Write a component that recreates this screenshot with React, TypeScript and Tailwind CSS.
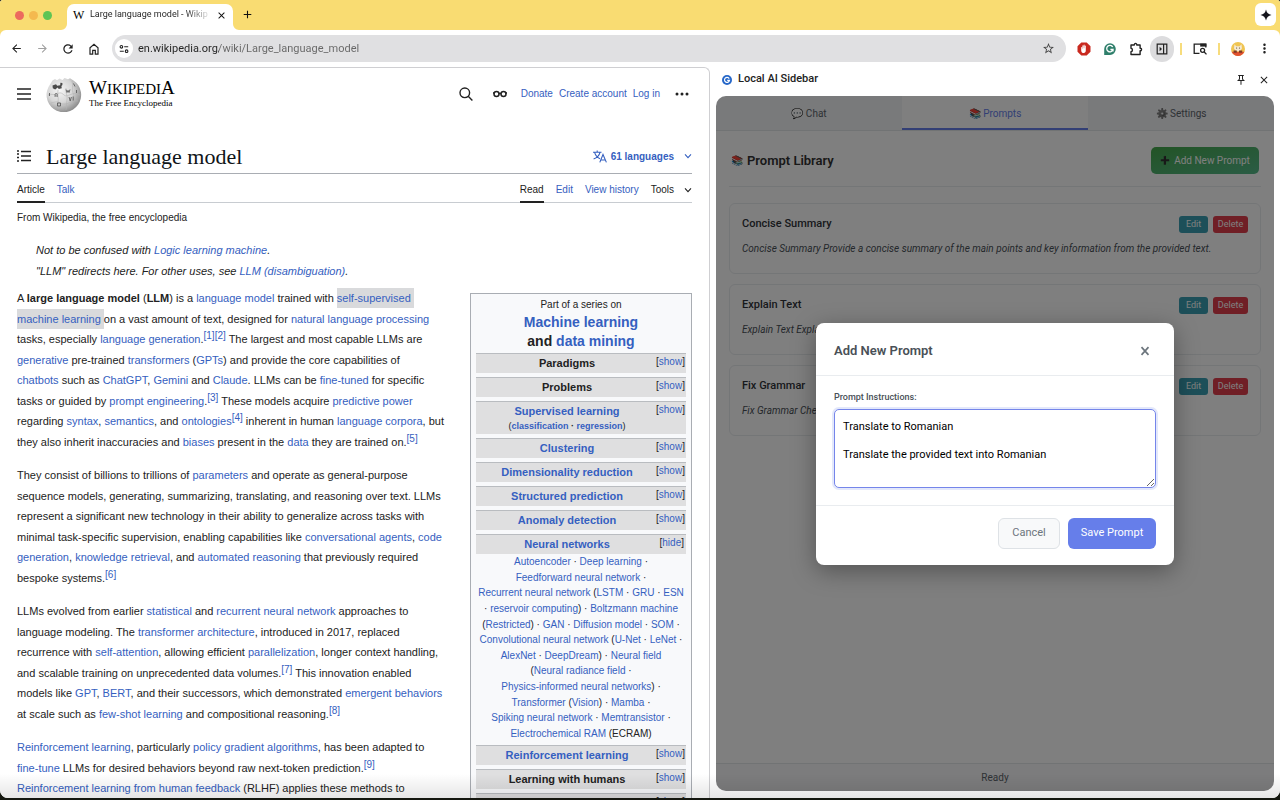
import React from "react";
import {
  MdAdd,
  MdArrowBack,
  MdArrowForward,
  MdClose,
  MdMoreVert,
  MdOutlinePushPin,
  MdRefresh,
  MdStarBorder,
} from "react-icons/md";

/* ---------- shared bits ---------- */

function A({ children }: { children: React.ReactNode }) {
  return (
    <a href="#" className="text-[#3560c0]">
      {children}
    </a>
  );
}

function Ref({ n }: { n: string }) {
  return (
    <sup className="relative -top-1 align-baseline text-[10px] leading-none">
      <A>{n}</A>
    </sup>
  );
}

function Lines({ className, children }: { className: string; children: React.ReactNode }) {
  return <div className={"flex flex-col justify-between whitespace-nowrap leading-5 " + className}>{children}</div>;
}

function Chevron({ className }: { className: string }) {
  return (
    <svg viewBox="0 0 8 8" className={"h-2 w-2 " + className} fill="none" stroke="currentColor" strokeWidth="1.1">
      <path d="M1 2.4 4 5.6 7 2.4" />
    </svg>
  );
}

/* ---------- browser chrome ---------- */

function TabStrip() {
  return (
    <div className="flex h-[30px] items-end bg-[#f9dc72]">
      <div className="flex h-full w-[61px] items-center gap-[5px] pl-[15px]">
        <span className="h-[9px] w-[9px] rounded-full bg-[#ec6a5e]" />
        <span className="h-[9px] w-[9px] rounded-full bg-[#f4b94f]" />
        <span className="h-[9px] w-[9px] rounded-full bg-[#5fc454]" />
      </div>
      <svg viewBox="0 0 6 6" className="h-1.5 w-1.5 fill-white">
        <path d="M6 0v6H0A6 6 0 0 0 6 0Z" />
      </svg>
      <div className="flex h-[26px] w-[166px] items-center rounded-t-[7px] bg-white pb-1 pr-1.5 pl-1.5">
        <span className="w-[17px] font-['Liberation_Serif',serif] text-[12px] leading-none text-black">W</span>
        <span className="min-w-0 flex-1 bg-linear-to-r from-[#222] from-80% to-[#ddd] bg-clip-text text-[9px] whitespace-nowrap text-transparent">
          Large language model - Wikip
        </span>
        <button aria-label="Close tab" className="ml-2 text-[#111]">
          <MdClose className="h-[11px] w-[11px]" />
        </button>
      </div>
      <svg viewBox="0 0 6 6" className="h-1.5 w-1.5 fill-white">
        <path d="M0 0v6h6A6 6 0 0 1 0 0Z" />
      </svg>
      <button aria-label="New tab" className="mb-[9px] ml-[2px] text-[#111]">
        <MdAdd className="h-[13px] w-[13px]" />
      </button>
      <button aria-label="Assistant" className="mr-1 mb-1 ml-auto flex h-[23px] w-[21px] items-center justify-center rounded-md bg-white">
        <svg viewBox="0 0 12 12" className="h-3 w-3 fill-[#14141c]">
          <path d="M6 0.5Q6.9 5.1 11.5 6 6.9 6.9 6 11.5 5.1 6.9 0.5 6 5.1 5.1 6 0.5Z" />
        </svg>
      </button>
    </div>
  );
}

function Slot({ label, children }: { label: string; children: React.ReactNode }) {
  return (
    <button aria-label={label} className="flex h-[26px] w-[26px] shrink-0 items-center justify-center">
      {children}
    </button>
  );
}

function Toolbar() {
  return (
    <div className="bg-[#f9dc72]">
      <div className="flex h-[37px] items-center rounded-t-[6px] bg-white px-[3px] text-[#222]">
        <Slot label="Back">
          <MdArrowBack className="h-[13px] w-[13px]" />
        </Slot>
        <Slot label="Forward">
          <MdArrowForward className="h-[13px] w-[13px] text-[#a0a0a0]" />
        </Slot>
        <Slot label="Reload">
          <MdRefresh className="h-[14px] w-[14px]" />
        </Slot>
        <Slot label="Home">
          <svg viewBox="0 0 12 12" className="h-3 w-3" fill="none" stroke="currentColor" strokeWidth="1.2">
            <path d="M2 11.2V4.8L6 1.3l4 3.5v6.4H7.3V7.4H4.7v3.8Z" />
          </svg>
        </Slot>
        <div className="mx-[5px] flex h-[27px] min-w-0 flex-1 items-center rounded-full bg-[#e0e0e2] pr-[11px] pl-[3px]">
          <button aria-label="Site information" className="flex h-[19px] w-[18px] items-center justify-center rounded-full bg-white">
            <svg viewBox="0 0 10 10" className="h-2.5 w-2.5" fill="none" stroke="currentColor" strokeWidth="1.1">
              <circle cx="2.4" cy="2.8" r="1.3" />
              <path d="M5.2 2.8h4M.8 7.2h4" />
              <circle cx="7.6" cy="7.2" r="1.3" />
            </svg>
          </button>
          <input
            aria-label="Address"
            className="mt-px ml-[5px] min-w-0 flex-1 bg-linear-to-r from-[#222] from-[81px] to-[#666] to-[81px] bg-clip-text text-[11px] text-transparent outline-none"
            defaultValue="en.wikipedia.org/wiki/Large_language_model"
          />
          <MdStarBorder className="h-[13px] w-[13px] text-[#444]" />
        </div>
        <Slot label="Ad blocker">
          <svg viewBox="0 0 14 14" className="h-3.5 w-3.5">
            <path fill="#c9291f" d="M4.3.5h5.4l3.800 3.800v5.400l-3.800 3.800H4.300L.5 9.700V4.300Z" />
            <path
              fill="#fff"
              d="M4.200 5.600c0-.8 1-.8 1 0v1.300h.2V3.900c0-.8 1-.8 1 0v2.400h.2V3.200c0-.8 1-.8 1 0v3.100h.2V4c0-.8 1-.8 1 0v4.500c0 1.600-.8 2.500-2 2.500-1.500 0-2.600-1-2.600-2.600Z"
            />
          </svg>
        </Slot>
        <Slot label="Grammar checker">
          <svg viewBox="0 0 14 14" className="h-3.5 w-3.5">
            <path fill="#2f7f6b" d="M7 1.300a5.800 5.800 0 0 1 0 11.600H1.200V7A5.800 5.800 0 0 1 7 1.300Z" />
            <path d="M9.700 5A3.200 3.200 0 1 0 10 7.500H7.400M10 7.400v2" fill="none" stroke="#fff" strokeWidth="1.300" />
          </svg>
        </Slot>
        <Slot label="Extensions">
          <svg viewBox="0 0 14 14" className="h-3.5 w-3.5" fill="none" stroke="currentColor" strokeWidth="1.400">
            <path d="M2 3h3.300c-.3-2 2.800-2 2.500 0h3.300v3.300c1.900-.2 1.900 2.600 0 2.400v3.800H2V9.700c1.900-.2 1.900-3.200 0-3.400Z" strokeLinejoin="round" />
          </svg>
        </Slot>
        <Slot label="Side panel">
          <span className="flex h-[26px] w-6 items-center justify-center rounded-full bg-[#dcdcde]">
            <svg viewBox="0 0 12 12" className="h-3 w-3" fill="none" stroke="currentColor" strokeWidth="1.200">
              <path d="M1.200 1.200h9.600v9.600H1.200ZM7.600 1.200v9.600" />
              <path d="M3.600 3.800v4.400L6 6Z" fill="currentColor" stroke="none" />
            </svg>
          </span>
        </Slot>
        <span className="mx-[5px] h-3 w-0.5 shrink-0 bg-[#f7dc7c]" />
        <Slot label="Search tabs">
          <svg viewBox="0 0 14 14" className="h-3.5 w-3.5" fill="none" stroke="currentColor" strokeWidth="1.300">
            <path d="M6.500 11.400H1.200V2.200h11.600v3.300" />
            <path d="M7.200 1.600h6.200v3H7.200Z" fill="currentColor" stroke="none" />
            <circle cx="9.600" cy="8.300" r="2" />
            <path d="m11 9.800 2.500 2.600" />
          </svg>
        </Slot>
        <span className="mx-[5px] h-3 w-0.5 shrink-0 bg-[#f7dc7c]" />
        <Slot label="Profile">
          <svg viewBox="0 0 14 14" className="h-3.5 w-3.5">
            <circle cx="7" cy="7" r="7" fill="#f0c552" />
            <path d="M.6 9.800a7 7 0 0 0 12.800 0Z" fill="#e0502f" />
            <path d="m3.500 2.300 1.600 2h3.600l1.800-2 .4 4.300-2 2.600H5.200L3 6.600Z" fill="#f4e9d2" />
            <path d="M2.600 8.500h3.200v2.200H2.600ZM8 8.500h3.200v2.200H8Z" fill="#7a3a24" />
            <circle cx="5.600" cy="6" r=".6" fill="#59422c" />
            <circle cx="8.500" cy="6" r=".6" fill="#59422c" />
          </svg>
        </Slot>
        <Slot label="Menu">
          <MdMoreVert className="h-[15px] w-[15px]" />
        </Slot>
      </div>
    </div>
  );
}

/* ---------- encyclopedia page ---------- */

function Globe() {
  return (
    <svg viewBox="0 0 36 36" className="h-9 w-9">
      <defs>
        <radialGradient id="globe" cx="38%" cy="35%" r="68%">
          <stop offset="0" stopColor="#f7f7f7" />
          <stop offset=".55" stopColor="#d6d6d6" />
          <stop offset="1" stopColor="#8c8c8c" />
        </radialGradient>
      </defs>
      <path
        d="M6.500 4.500 9 3l2 1.200 2.500-1.800 3 1.500 2-1.800 3.500 1.200 2-1 3.500 2.200A17.300 17.300 0 1 1 4 8.500Z"
        fill="url(#globe)"
      />
      <path d="M6.500 9.500 10 8.200l1.200 1.600 3-.6.200-2.400 2 .2v2l-1 1 .4 2.300-3 .8-1.200-1.500-2.400 1.800-2.400-1.200Z" fill="#4b4b4b" />
      <path
        d="M2 19c4-2 6 1 9-1s5-1 7 1 5 0 8-1 5 0 8 1M5 27c4-1 6-2 9 0s8 1 10-1 5-1 8-1M12 14c-1 5 1 8 0 12s0 5 1 7M20 12c-1 4 2 8 1 12s0 7-1 10M26 5c2 5-1 8 1 12s0 7-1 11"
        fill="none"
        stroke="#b4b4b4"
        strokeWidth=".6"
      />
      <g fill="none" stroke="#5c5c5c" strokeWidth=".9">
        <path d="M8.500 20.200h1.200c-2.800-3.600 3.600-3.600.9 0h1.300M20 13.500l1 3 1-2.200 1 2.200 1-3M23 21l1.200 4 1.200-4M27.200 20.500v4M11.500 27v3h3v-3h-3M27.500 7.500l1.500 3M30.500 14v3M3.500 17v3" />
      </g>
    </svg>
  );
}

function WikiHeader() {
  return (
    <header className="flex h-[51px] items-center text-[#222]">
      <button aria-label="Main menu">
        <svg viewBox="0 0 14 12" className="h-3 w-3.5" stroke="currentColor" strokeWidth="1.400">
          <path d="M0 1h14M0 6h14M0 11h14" />
        </svg>
      </button>
      <a href="#" className="ml-[15px] flex items-center gap-[7px] font-['Liberation_Serif',serif] text-black">
        <Globe />
        <span className="flex flex-col">
          <span className="text-[15px] leading-[18px]">
            <span className="text-[19px]">W</span>IKIPEDI<span className="text-[19px]">A</span>
          </span>
          <span className="text-[9px] leading-[10px]">The Free Encyclopedia</span>
        </span>
      </a>
      <div className="ml-auto flex items-center">
        <button aria-label="Search">
          <svg viewBox="0 0 14 14" className="h-3.5 w-3.5" fill="none" stroke="currentColor" strokeWidth="1.400">
            <circle cx="5.800" cy="5.800" r="4.800" />
            <path d="m9.200 9.200 4.200 4.300" />
          </svg>
        </button>
        <button aria-label="Appearance" className="ml-5">
          <svg viewBox="0 0 14 8" className="h-2 w-3.5" fill="none" stroke="currentColor" strokeWidth="1.500">
            <circle cx="3.500" cy="4" r="2.500" />
            <circle cx="10.500" cy="4" r="2.500" />
            <path d="M6 3.600h2M0 3h1.300M12.700 3H14" />
          </svg>
        </button>
        <nav className="ml-3.5 flex gap-1.5 text-[10px]">
          <A>Donate</A>
          <A>Create account</A>
          <A>Log in</A>
        </nav>
        <button aria-label="More options" className="mr-[3px] ml-[15px]">
          <svg viewBox="0 0 14 4" className="h-1 w-3.5" fill="currentColor">
            <circle cx="2" cy="2" r="1.500" />
            <circle cx="7" cy="2" r="1.500" />
            <circle cx="12" cy="2" r="1.500" />
          </svg>
        </button>
      </div>
    </header>
  );
}

function TitleBar() {
  return (
    <>
      <div className="mt-5 flex h-[35px] items-center border-b border-[#a9adb3]">
        <button aria-label="Contents" className="text-[#222]">
          <svg viewBox="0 0 14 12" className="h-3 w-3.5" stroke="currentColor" strokeWidth="1.400">
            <path d="M4 1.500h10M4 6h10M4 10.500h10M0 1h2M0 4h2M0 7.500h2M0 11h2" />
          </svg>
        </button>
        <h1 className="mt-px ml-[15px] font-['Liberation_Serif',serif] text-[22px] leading-8 text-[#101418]">Large language model</h1>
        <button className="ml-auto flex items-center text-[10px] font-bold text-[#3560c0]">
          <svg viewBox="0 0 14 13" className="mr-1 h-[13px] w-3.5" fill="none" stroke="currentColor" strokeWidth="1.100">
            <path d="M0 2.200h8.500M4.200.4v1.800M1.600 2.400C2.600 6 5 7.800 7 8.800M7 2.400C6.200 6 3.400 8 .6 9M6.800 12.400 10 4.500l3.400 7.900M8 10h4.200" />
          </svg>
          61 languages
          <Chevron className="ml-2.5" />
        </button>
      </div>
      <div className="flex h-[29px] items-stretch border-b border-[#c8ccd1] text-[10px]">
        <a href="#" className="-mb-px border-b-2 border-[#222] leading-[31px] text-[#222]">
          Article
        </a>
        <a href="#" className="ml-3 leading-[31px] text-[#3560c0]">
          Talk
        </a>
        <div className="ml-auto flex gap-3 leading-[31px]">
          <a href="#" className="-mb-px border-b-2 border-[#222] text-[#222]">
            Read
          </a>
          <A>Edit</A>
          <A>View history</A>
          <button className="flex h-[31px] items-center text-[#222]">
            Tools
            <Chevron className="ml-2.5" />
          </button>
        </div>
      </div>
    </>
  );
}

function Article() {
  return (
    <div className="flex min-w-0 flex-1 flex-col gap-[13px]">
      <Lines className="h-[164px]">
        <p>
          A <b>large language model</b> (<b>LLM</b>) is a <A>language model</A> trained with{" "}
          <mark className="inline-block bg-[#d9dadc] pr-[3px]">
            <A>self-supervised</A>
          </mark>
        </p>
        <p>
          <mark className="inline-block bg-[#d9dadc] pr-[3px]">
            <A>machine learning</A>
          </mark>
          on a vast amount of text, designed for <A>natural language processing</A>
        </p>
        <p>
          tasks, especially <A>language generation</A>.<Ref n="[1][2]" /> The largest and most capable LLMs are
        </p>
        <p>
          <A>generative</A> pre-trained <A>transformers</A> (<A>GPTs</A>) and provide the core capabilities of
        </p>
        <p>
          <A>chatbots</A> such as <A>ChatGPT</A>, <A>Gemini</A> and <A>Claude</A>. LLMs can be <A>fine-tuned</A> for specific
        </p>
        <p>
          tasks or guided by <A>prompt engineering</A>.<Ref n="[3]" /> These models acquire <A>predictive power</A>
        </p>
        <p>
          regarding <A>syntax</A>, <A>semantics</A>, and <A>ontologies</A>
          <Ref n="[4]" /> inherent in human <A>language corpora</A>, but
        </p>
        <p>
          they also inherit inaccuracies and <A>biases</A> present in the <A>data</A> they are trained on.
          <Ref n="[5]" />
        </p>
      </Lines>
      <Lines className="h-[123px]">
        <p>
          They consist of billions to trillions of <A>parameters</A> and operate as general-purpose
        </p>
        <p>sequence models, generating, summarizing, translating, and reasoning over text. LLMs</p>
        <p>represent a significant new technology in their ability to generalize across tasks with</p>
        <p>
          minimal task-specific supervision, enabling capabilities like <A>conversational agents</A>, <A>code</A>
        </p>
        <p>
          <A>generation</A>, <A>knowledge retrieval</A>, and <A>automated reasoning</A> that previously required
        </p>
        <p>
          bespoke systems.
          <Ref n="[6]" />
        </p>
      </Lines>
      <Lines className="h-[123px]">
        <p>
          LLMs evolved from earlier <A>statistical</A> and <A>recurrent neural network</A> approaches to
        </p>
        <p>
          language modeling. The <A>transformer architecture</A>, introduced in 2017, replaced
        </p>
        <p>
          recurrence with <A>self-attention</A>, allowing efficient <A>parallelization</A>, longer context handling,
        </p>
        <p>
          and scalable training on unprecedented data volumes.
          <Ref n="[7]" /> This innovation enabled
        </p>
        <p>
          models like <A>GPT</A>, <A>BERT</A>, and their successors, which demonstrated <A>emergent behaviors</A>
        </p>
        <p>
          at scale such as <A>few-shot learning</A> and compositional reasoning.
          <Ref n="[8]" />
        </p>
      </Lines>
      <Lines className="h-[61px]">
        <p>
          <A>Reinforcement learning</A>, particularly <A>policy gradient algorithms</A>, has been adapted to
        </p>
        <p>
          <A>fine-tune</A> LLMs for desired behaviors beyond raw next-token prediction.
          <Ref n="[9]" />
        </p>
        <p>
          <A>Reinforcement learning from human feedback</A> (RLHF) applies these methods to
        </p>
      </Lines>
    </div>
  );
}

function Row({ title, sub, open, link = true }: { title: string; sub?: boolean; open?: boolean; link?: boolean }) {
  return (
    <div className={"flex border-t border-[#b9bcc0] bg-[#dfdfe0] " + (open ? "" : "mb-1")}>
      <div className="flex-1 pl-[2px] text-center font-bold">
        <div className={sub ? "leading-[18px]" : "leading-[19px]"}>{link ? <A>{title}</A> : title}</div>
        {sub && (
          <div className="pb-[2px] text-[9px] leading-3">
            <span className="font-normal">(</span>
            <A>classification</A> · <A>regression</A>
            <span className="font-normal">)</span>
          </div>
        )}
      </div>
      <button className="h-4 w-[30px] pr-0.5 text-right text-[10px] leading-4">
        [<span className="text-[#3560c0]">{open ? "hide" : "show"}</span>]
      </button>
    </div>
  );
}

function Infobox() {
  return (
    <aside className="mt-[5px] w-[222px] shrink-0 border border-[#a9adb3] bg-[#f8f9fb] px-[5px] pt-[3px] text-[11px] text-[#222]">
      <div className="text-center text-[10px] leading-4">Part of a series on</div>
      <div className="pb-0.5 text-center text-[14px] font-bold leading-[19px]">
        <A>Machine learning</A>
        <br />
        and <A>data mining</A>
      </div>
      <Row title="Paradigms" link={false} />
      <Row title="Problems" link={false} />
      <Row title="Supervised learning" sub />
      <Row title="Clustering" />
      <Row title="Dimensionality reduction" />
      <Row title="Structured prediction" />
      <Row title="Anomaly detection" />
      <Row title="Neural networks" open />
      <div className="mb-1 flex h-[187px] flex-col justify-between text-center text-[10px] leading-[15px] whitespace-nowrap">
        <p>
          <A>Autoencoder</A> · <A>Deep learning</A> ·
        </p>
        <p>
          <A>Feedforward neural network</A> ·
        </p>
        <p>
          <A>Recurrent neural network</A> (<A>LSTM</A> · <A>GRU</A> · <A>ESN</A>
        </p>
        <p>
          · <A>reservoir computing</A>) · <A>Boltzmann machine</A>
        </p>
        <p>
          (<A>Restricted</A>) · <A>GAN</A> · <A>Diffusion model</A> · <A>SOM</A> ·
        </p>
        <p>
          <A>Convolutional neural network</A> (<A>U-Net</A> · <A>LeNet</A> ·
        </p>
        <p>
          <A>AlexNet</A> · <A>DeepDream</A>) · <A>Neural field</A>
        </p>
        <p>
          (<A>Neural radiance field</A> ·
        </p>
        <p>
          <A>Physics-informed neural networks</A>) ·
        </p>
        <p>
          <A>Transformer</A> (<A>Vision</A>) · <A>Mamba</A> ·
        </p>
        <p>
          <A>Spiking neural network</A> · <A>Memtransistor</A> ·
        </p>
        <p>
          <A>Electrochemical RAM</A> (ECRAM)
        </p>
      </div>
      <Row title="Reinforcement learning" />
      <Row title="Learning with humans" link={false} />
      <Row title="Model diagnostics" />
    </aside>
  );
}

function WikiPage() {
  return (
    <main className="min-w-0 flex-1 overflow-hidden rounded-tr-[6px] border-t border-r border-[#cfcfd2] bg-white px-[17px] font-['Liberation_Sans',sans-serif] text-[11px] text-[#222]">
      <WikiHeader />
      <TitleBar />
      <p className="mt-[5px] text-[10px] leading-5">From Wikipedia, the free encyclopedia</p>
      <div className="mt-3 mb-[7px] flex flex-col gap-px pl-[19px] leading-5 italic">
        <p>
          Not to be confused with <A>Logic learning machine</A>.
        </p>
        <p>
          "LLM" redirects here. For other uses, see <A>LLM (disambiguation)</A>.
        </p>
      </div>
      <div className="flex items-start">
        <Article />
        <Infobox />
      </div>
    </main>
  );
}

/* ---------- side panel ---------- */

const prompts = [
  {
    name: "Concise Summary",
    text: "Concise Summary Provide a concise summary of the main points and key information from the provided text.",
  },
  { name: "Explain Text", text: "Explain Text Explain the provided text in simple and clear terms." },
  {
    name: "Fix Grammar",
    text: "Fix Grammar Check and correct any grammar, spelling or punctuation errors in the provided text.",
  },
];

function PromptCard({ name, text }: { name: string; text: string }) {
  return (
    <article className="rounded-md border border-[#e9ecef] px-3 pt-3 pb-3.5">
      <div className="flex h-[17px] items-center gap-[5px] text-[9px] text-white">
        <h3 className="mr-auto text-[11px] font-medium text-[#2f3338]">{name}</h3>
        <button className="h-[17px] w-[29px] rounded-[3px] bg-[#3a9fb2]">Edit</button>
        <button className="h-[17px] w-[35px] rounded-[3px] bg-[#e03e4d]">Delete</button>
      </div>
      <p className="mt-1.5 text-[10px] leading-5 whitespace-nowrap text-[#495057] italic">{text}</p>
    </article>
  );
}

function PromptDialog() {
  return (
    <div className="absolute inset-0 flex items-center justify-center bg-black/50">
      <div role="dialog" aria-label="Add New Prompt" className="w-[358px] rounded-lg bg-white shadow-[0_6px_24px_rgba(0,0,0,0.35)]">
        <div className="flex h-[53px] items-center justify-between border-b border-[#e9ecef] pt-1 pr-6 pl-[18px]">
          <h2 className="text-[13px] font-semibold text-[#495057]">Add New Prompt</h2>
          <button aria-label="Close" className="text-[#6c757d]">
            <svg viewBox="0 0 10 10" className="h-2.5 w-2.5" stroke="currentColor" strokeWidth="1.700">
              <path d="m1.500 1.200 7 7.600M8.500 1.200l-7 7.600" />
            </svg>
          </button>
        </div>
        <div className="px-[18px] pt-3.5 pb-[17px]">
          <label htmlFor="instructions" className="mb-1 block text-[9px] font-medium leading-[15px] text-[#495057]">
            Prompt Instructions:
          </label>
          <textarea
            id="instructions"
            className="block h-[79px] w-full resize-y rounded-[5px] border border-[#7585ea] bg-white px-2 py-2.5 text-[11px] leading-[14px] text-black shadow-[0_0_0_2px_rgba(102,126,234,0.18)] outline-none"
            defaultValue={"Translate to Romanian\n\nTranslate the provided text into Romanian"}
          />
        </div>
        <div className="flex justify-end gap-2 border-t border-[#e9ecef] px-[18px] pt-3 pb-4 text-[11px]">
          <button className="h-[31px] w-[62px] rounded-md border border-[#dee2e6] bg-[#f8f9fa] text-[#6c757d]">Cancel</button>
          <button className="h-[31px] w-[88px] rounded-md bg-[#667eea] text-white">Save Prompt</button>
        </div>
      </div>
    </div>
  );
}

function SidePanel() {
  return (
    <section className="flex w-[570px] shrink-0 flex-col bg-white px-1.5 pb-[7px]">
      <div className="mb-1 flex h-[25px] items-center pr-1 pl-1.5 text-[#222]">
        <svg viewBox="0 0 10 10" className="h-2.5 w-2.5">
          <circle cx="5" cy="5" r="5" fill="#2667c8" />
          <path d="M7.200 3.600A2.500 2.500 0 1 0 7.500 5.300H5.200" fill="none" stroke="#fff" strokeWidth="1.200" />
        </svg>
        <h2 className="mr-auto ml-1.5 text-[11px] font-medium">Local AI Sidebar</h2>
        <button aria-label="Pin">
          <MdOutlinePushPin className="h-3 w-3" />
        </button>
        <button aria-label="Close side panel" className="ml-[11px]">
          <MdClose className="h-3 w-3" />
        </button>
      </div>
      <div className="relative flex min-h-0 flex-1 flex-col overflow-hidden rounded-[10px] bg-white">
        <nav className="grid h-[35px] grid-cols-3 border-b border-[#e3e6e9] bg-[#f3f4f6] text-[10px] text-[#5c646b]">
          <button>💬 Chat</button>
          <button className="border-b-2 border-[#667eea] bg-white pt-0.5 text-[#667eea]">📚 Prompts</button>
          <button>
            <span className="brightness-75 grayscale">⚙️</span> Settings
          </button>
        </nav>
        <div className="flex flex-1 flex-col px-[13px] pt-4">
          <div className="mb-4 flex items-center justify-between border-b border-[#e9ecef] pr-0.5 pb-3 pl-0.5">
            <h2 className="flex items-center gap-1 text-[13px] font-semibold text-[#333]">
              <span className="text-[10px]">📚</span>Prompt Library
            </h2>
            <button className="flex h-[27px] w-[108px] items-center justify-center gap-1 rounded-[5px] bg-linear-to-br from-[#46a84b] to-[#56b98a] text-[10px] text-white">
              <span className="text-[8px] brightness-50 grayscale">➕</span>
              Add New Prompt
            </button>
          </div>
          <div className="flex flex-col gap-2.5">
            {prompts.map((p) => (
              <PromptCard key={p.name} {...p} />
            ))}
          </div>
        </div>
        <footer className="h-7 border-t border-[#e3e6e9] bg-[#f8f8fa] text-center text-[10px] leading-[28px] text-[#5c646b]">Ready</footer>
        <PromptDialog />
      </div>
    </section>
  );
}

export default function App() {
  return (
    <div className="h-screen overflow-hidden bg-[#14170f] pb-0.5 font-[Roboto,sans-serif]">
      <div className="relative flex h-full flex-col overflow-hidden rounded-t-[3px] rounded-b-[8px] bg-white">
        <TabStrip />
        <Toolbar />
        <div className="flex min-h-0 flex-1">
          <WikiPage />
          <SidePanel />
        </div>
        <div className="pointer-events-none absolute inset-x-0 bottom-0 h-6 bg-linear-to-b from-transparent to-black/10" />
      </div>
    </div>
  );
}
